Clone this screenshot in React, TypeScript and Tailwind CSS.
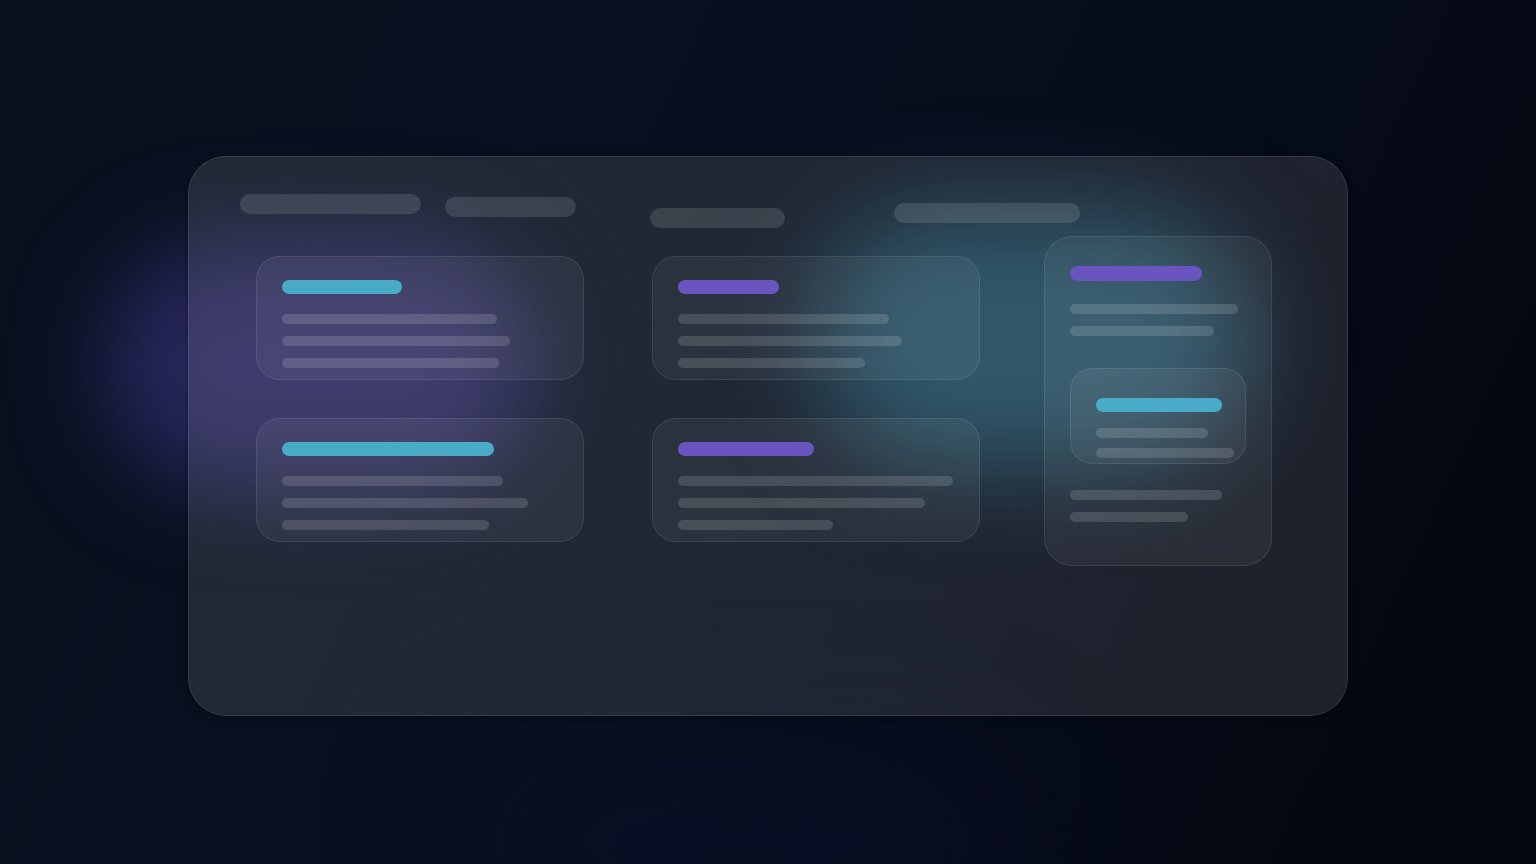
import React from 'react';

type Card = {
  accent: 'cyan' | 'purple';
  title: number;
  lines: number[];
};

// skeleton widths taken from the layout, in px
const leftCards: Card[] = [
  { accent: 'cyan', title: 120, lines: [215, 228, 217] },
  { accent: 'cyan', title: 212, lines: [221, 246, 207] },
];

const middleCards: Card[] = [
  { accent: 'purple', title: 101, lines: [211, 224, 187] },
  { accent: 'purple', title: 136, lines: [275, 247, 155] },
];

function Accent({ kind, width, h = 'h-[14px]' }: { kind: 'cyan' | 'purple'; width: number; h?: string }) {
  return (
    <div
      className={`${h} rounded-full ${kind === 'cyan' ? 'bg-[#49abc7]' : 'bg-[#6a55c0]'}`}
      style={{ width }}
    />
  );
}

function Line({ width }: { width: number }) {
  return <div className="h-[10px] rounded-full bg-white/[0.14]" style={{ width }} />;
}

function SkeletonCard({ card }: { card: Card }) {
  return (
    <div className="flex h-[124px] w-[328px] flex-col rounded-[24px] border border-white/[0.09] bg-white/[0.05] pl-[25px] pt-[23px]">
      <Accent kind={card.accent} width={card.title} />
      <div className="mt-[20px] flex flex-col gap-[12px]">
        {card.lines.map((w, i) => (
          <Line key={i} width={w} />
        ))}
      </div>
    </div>
  );
}

export default function App() {
  return (
    <div className="relative min-h-screen w-full overflow-hidden bg-[linear-gradient(115deg,#08121f_0%,#07101e_45%,#060b18_70%,#03060f_100%)]">
      {/* soft glows behind the glass */}
      <div className="pointer-events-none absolute left-[105px] top-[240px] h-[250px] w-[430px] rounded-full bg-[#28265c] blur-[45px]" />
      <div className="pointer-events-none absolute left-[815px] top-[212px] h-[255px] w-[435px] rounded-full bg-[#1a4559] blur-[48px]" />
      <div className="pointer-events-none absolute left-[480px] top-[770px] h-[140px] w-[520px] rounded-full bg-[#0b0f28] blur-[70px]" />

      <div className="relative flex justify-center pt-[156px]">
        <div className="h-[560px] w-[1160px] rounded-[38px] border border-white/[0.1] bg-white/[0.1] pl-[51px] pt-[37px] shadow-[0_2px_6px_rgba(0,0,0,0.35)]">
          {/* header pills */}
          <div className="flex h-[42px] items-start">
            <div className="h-[20px] w-[181px] rounded-full bg-white/[0.12]" />
            <div className="ml-[24px] mt-[3px] h-[20px] w-[131px] rounded-full bg-white/[0.12]" />
            <div className="ml-[74px] mt-[14px] h-[20px] w-[135px] rounded-full bg-white/[0.12]" />
            <div className="ml-[109px] mt-[9px] h-[20px] w-[186px] rounded-full bg-white/[0.12]" />
          </div>

          {/* board columns */}
          <div className="ml-[16px] flex items-start">
            <div className="mt-[20px] flex flex-col gap-[38px]">
              {leftCards.map((c, i) => (
                <SkeletonCard key={i} card={c} />
              ))}
            </div>

            <div className="ml-[68px] mt-[20px] flex flex-col gap-[38px]">
              {middleCards.map((c, i) => (
                <SkeletonCard key={i} card={c} />
              ))}
            </div>

            <div className="ml-[64px] flex h-[330px] w-[228px] flex-col rounded-[28px] border border-white/[0.09] bg-white/[0.05] pl-[25px] pt-[29px]">
              <Accent kind="purple" width={132} h="h-[15px]" />
              <div className="mt-[23px] flex flex-col gap-[12px]">
                <Line width={168} />
                <Line width={144} />
              </div>

              <div className="mt-[32px] flex h-[96px] w-[176px] flex-col rounded-[22px] border border-white/[0.09] bg-white/[0.05] pl-[25px] pt-[29px]">
                <Accent kind="cyan" width={126} />
                <div className="mt-[16px] flex flex-col gap-[10px]">
                  <Line width={112} />
                  <Line width={138} />
                </div>
              </div>

              <div className="mt-[26px] flex flex-col gap-[12px]">
                <Line width={152} />
                <Line width={118} />
              </div>
            </div>
          </div>
        </div>
      </div>
    </div>
  );
}
